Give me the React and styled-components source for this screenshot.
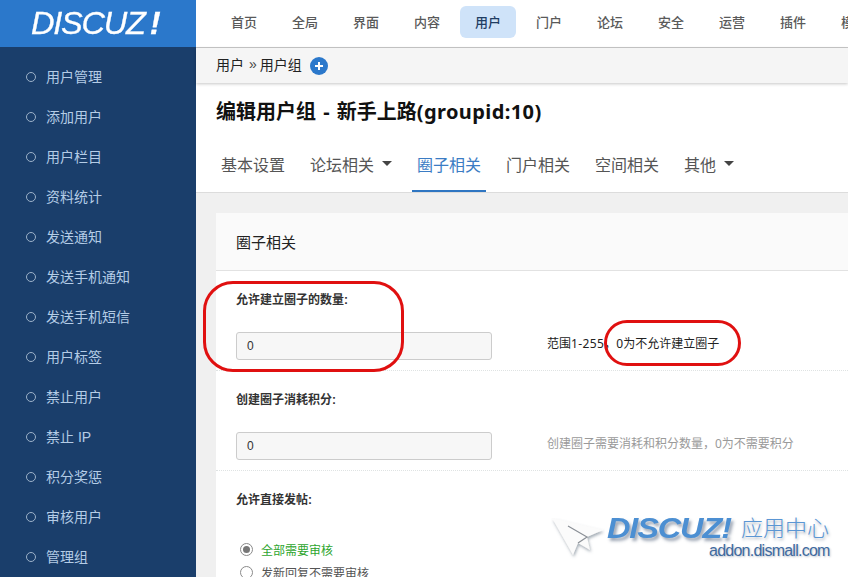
import React from "react";
import styled, { createGlobalStyle } from "styled-components";

const Global = createGlobalStyle`
  html, body { margin: 0; padding: 0; height: 100%; overflow: hidden; background: #fff; }
  body { font-family: "Liberation Sans", "Noto Sans CJK SC", sans-serif; }
  * { box-sizing: border-box; }
`;

const Page = styled.div`
  position: relative;
  display: flex;
  width: 848px;
  height: 577px;
  overflow: hidden;
`;
const Sidebar = styled.aside`
  flex: 0 0 196px;
  display: flex;
  flex-direction: column;
  background: #1a3e6b;
`;
const LogoBar = styled.div`
  height: 47px;
  background: #2b78cb;
  display: flex;
  align-items: center;
  padding-left: 31px;
`;
const LogoText = styled.span`
  font-size: 31px;
  font-style: italic;
  color: #fff;
  letter-spacing: -1.2px;
  line-height: 47px;
  font-family: "Liberation Sans", sans-serif;
  -webkit-text-stroke: 0.3px #fff;
  transform: scaleX(1.05);
  transform-origin: left center;
`;
const LogoBang = styled.span`
  font-weight: 700;
  margin-left: 5px;
`;
const SideList = styled.ul`
  list-style: none;
  margin: 0;
  padding: 9px 0 0 26px;
`;
const SideItem = styled.li`
  height: 40px;
  display: flex;
  align-items: center;
  gap: 10px;
  font-size: 14px;
  color: #b4cce6;
`;
const Ring = styled.i`
  width: 10px;
  height: 10px;
  margin-top: 2px;
  border: 1px solid #9db2c9;
  border-radius: 50%;
`;
const Main = styled.main`
  flex: 1;
  min-width: 0;
  display: flex;
  flex-direction: column;
`;
const TopNav = styled.nav`
  height: 48px;
  flex: none;
  padding: 6px 0 0 20px;
  display: flex;
  gap: 5px;
  border-bottom: 1px solid #c9c9c9;
  overflow: hidden;
`;
const NavItem = styled.a`
  flex: 0 0 56px;
  height: 32px;
  padding-bottom: 2px;
  display: flex;
  align-items: center;
  justify-content: center;
  border-radius: 6px;
  font-size: 13px;
  font-weight: 500;
  color: ${(p) => (p.$active ? "#1f3d63" : "#5a5a5a")};
  background: ${(p) => (p.$active ? "#cfe3f9" : "transparent")};
`;
const Crumbs = styled.div`
  height: 35px;
  flex: none;
  padding: 0 0 3px 20px;
  display: flex;
  align-items: center;
  font-size: 14px;
  color: #222;
  background: #f5f5f5;
  box-shadow: 0 1px 3px rgba(0, 0, 0, 0.22);
  position: relative;
`;
const CrumbSep = styled.span`
  margin: 0 3px 0 5px;
  font-size: 14px;
  color: #444;
`;
const AddBtn = styled.span`
  width: 18px;
  height: 18px;
  margin: 3px 0 0 8px;
  display: flex;
`;
const Title = styled.h1`
  margin: 0;
  padding: 14px 0 0 20px;
  height: 62px;
  line-height: 30px;
  font-size: 20px;
  font-weight: 700;
  word-spacing: 2px;
  font-family: "Noto Sans", "Noto Sans CJK SC", sans-serif;
  color: #111;
`;
const TitleId = styled.span`
  letter-spacing: 0.4px;
`;
const Tabs = styled.div`
  height: 48px;
  flex: none;
  padding-left: 20px;
  display: flex;
  gap: 15px;
  border-bottom: 1px solid #dcdcdc;
`;
const Tab = styled.a`
  height: 47px;
  padding: 0 5px 8px;
  display: flex;
  align-items: center;
  gap: 8px;
  font-size: 16px;
  color: ${(p) => (p.$active ? "#3b7cc4" : "#555")};
  border-bottom: 2px solid ${(p) => (p.$active ? "#2f76c2" : "transparent")};
`;
const Caret = styled.i`
  width: 0;
  height: 0;
  border-left: 5px solid transparent;
  border-right: 5px solid transparent;
  border-top: 5px solid #444;
`;
const Content = styled.div`
  flex: 1;
  background: #f0f0f0;
  padding: 20px 0 0 20px;
  overflow: hidden;
`;
const Card = styled.section`
  background: #fff;
  min-height: 400px;
`;
const CardHead = styled.div`
  height: 58px;
  padding-left: 20px;
  display: flex;
  align-items: center;
  font-size: 15px;
  color: #222;
  background: #fafafa;
  border-bottom: 1px solid #e2e2e2;
`;
const Row = styled.div`
  padding: 19px 0 10px 20px;
  border-bottom: 1px dotted #dfe3e3;
`;
const Label = styled.div`
  height: 18px;
  padding-top: 1px;
  line-height: 18px;
  margin-bottom: 24px;
  font-size: 12px;
  font-weight: 700;
  color: #333;
`;
const Control = styled.div`
  display: flex;
  align-items: center;
  gap: 55px;
`;
const Field = styled.div`
  width: 256px;
  height: 28px;
  padding-left: 10px;
  display: flex;
  align-items: center;
  font-size: 12px;
  color: #333;
  background: #f7f7f7;
  border: 1px solid #ccc;
  border-radius: 3px;
`;
const Hint = styled.span`
  margin-bottom: 7px;
  font-size: 12px;
  font-family: "Noto Sans", "Noto Sans CJK SC", sans-serif;
  color: ${(p) => (p.$muted ? "#9a9a9a" : "#222")};
`;
const HintRange = styled.span`
  letter-spacing: 0.4px;
`;
const RadioList = styled.div`
  margin-top: 32px;
  display: flex;
  flex-direction: column;
  gap: 5px;
`;
const RadioRow = styled.div`
  height: 18px;
  display: flex;
  align-items: center;
  gap: 8px;
  margin-left: 4px;
  font-size: 12px;
  color: ${(p) => (p.$on ? "#2ea52e" : "#555")};
`;
const Radio = styled.i`
  width: 13px;
  height: 13px;
  border-radius: 50%;
  border: 1px solid #8a8a8a;
  background: #fff;
  display: flex;
  align-items: center;
  justify-content: center;
  &::after {
    content: "";
    width: 7px;
    height: 7px;
    border-radius: 50%;
    background: ${(p) => (p.$on ? "#777" : "transparent")};
  }
`;
const Mark = styled.div`
  position: absolute;
  left: ${(p) => p.$x}px;
  top: ${(p) => p.$y}px;
  width: ${(p) => p.$w}px;
  height: ${(p) => p.$h}px;
  border: 3px solid #e01010;
  border-radius: ${(p) => p.$r}px;
  pointer-events: none;
`;
const Stamp = styled.div`
  position: absolute;
  left: 551px;
  top: 515px;
  width: 285px;
  height: 45px;
`;
const StampArrow = styled.svg`
  position: absolute;
  left: 0;
  top: 3px;
`;
const StampBrand = styled.span`
  position: absolute;
  left: 56px;
  top: -2px;
  font-size: 29px;
  line-height: 30px;
  font-weight: 700;
  font-style: italic;
  letter-spacing: -1px;
  color: #4c8fd2;
  text-shadow: 2px 3px 3px rgba(40, 60, 90, 0.45);
  transform: scaleX(1.12);
  transform-origin: left center;
`;
const StampCn = styled.span`
  position: absolute;
  left: 190px;
  top: 0;
  font-size: 22px;
  line-height: 28px;
  font-weight: 300;
  color: #5b96d4;
  text-shadow: 1px 2px 3px rgba(40, 60, 90, 0.4);
`;
const StampUrl = styled.span`
  position: absolute;
  left: 158px;
  top: 26px;
  font-size: 16px;
  line-height: 20px;
  letter-spacing: -0.75px;
  color: #3f6a9f;
  text-shadow: 1px 1px 2px rgba(40, 60, 90, 0.3);
`;

const side = ["用户管理","添加用户","用户栏目","资料统计","发送通知","发送手机通知","发送手机短信","用户标签","禁止用户","禁止 IP","积分奖惩","审核用户","管理组"];
const nav = ["首页","全局","界面","内容","用户","门户","论坛","安全","运营","插件","模板"];

export default function App() {
  return (
    <Page>
      <Global />
      <Sidebar>
        <LogoBar>
          <LogoText>DISCUZ<LogoBang>!</LogoBang></LogoText>
        </LogoBar>
        <SideList>
          {side.map((s) => (
            <SideItem key={s}><Ring />{s}</SideItem>
          ))}
        </SideList>
      </Sidebar>
      <Main>
        <TopNav>
          {nav.map((n) => (
            <NavItem key={n} $active={n === "用户"}>{n}</NavItem>
          ))}
        </TopNav>
        <Crumbs>
          用户<CrumbSep>»</CrumbSep>用户组
          <AddBtn>
            <svg width="18" height="18" viewBox="0 0 18 18">
              <circle cx="9" cy="9" r="9" fill="#2b78cb" />
              <path d="M9 5v8M5 9h8" stroke="#fff" strokeWidth="2" />
            </svg>
          </AddBtn>
        </Crumbs>
        <Title>编辑用户组 - 新手上路<TitleId>(groupid:10)</TitleId></Title>
        <Tabs>
          <Tab>基本设置</Tab>
          <Tab>论坛相关<Caret /></Tab>
          <Tab $active>圈子相关</Tab>
          <Tab>门户相关</Tab>
          <Tab>空间相关</Tab>
          <Tab>其他<Caret /></Tab>
        </Tabs>
        <Content>
          <Card>
            <CardHead>圈子相关</CardHead>
            <Row>
              <Label>允许建立圈子的数量:</Label>
              <Control>
                <Field>0</Field>
                <Hint>范围<HintRange>1-255</HintRange>，0为不允许建立圈子</Hint>
              </Control>
            </Row>
            <Row>
              <Label>创建圈子消耗积分:</Label>
              <Control>
                <Field>0</Field>
                <Hint $muted>创建圈子需要消耗和积分数量，0为不需要积分</Hint>
              </Control>
            </Row>
            <Row>
              <Label>允许直接发帖:</Label>
              <RadioList>
                <RadioRow $on><Radio $on />全部需要审核</RadioRow>
                <RadioRow><Radio />发新回复不需要审核</RadioRow>
              </RadioList>
            </Row>
          </Card>
        </Content>
      </Main>
      <Mark $x={203} $y={281} $w={201} $h={91} $r={30} />
      <Mark $x={604} $y={320} $w={137} $h={46} $r={23} />
      <Stamp>
        <StampArrow width="54" height="42" viewBox="0 0 54 42">
          <defs>
            <filter id="s" x="-20%" y="-20%" width="140%" height="140%">
              <feDropShadow dx="1" dy="2" stdDeviation="1.5" floodColor="#5a6a7a" floodOpacity="0.55" />
            </filter>
          </defs>
          <path d="M1 0 L52 12 L36 19 L39 32 L27 25 L22 37 Z" fill="#fbfbfb" filter="url(#s)" />
          <path d="M17 8 L36 19 L27 25" fill="none" stroke="#8a8f96" strokeWidth="1.2" />
        </StampArrow>
        <StampBrand>DISCUZ!</StampBrand>
        <StampCn>应用中心</StampCn>
        <StampUrl>addon.dismall.com</StampUrl>
      </Stamp>
    </Page>
  );
}
